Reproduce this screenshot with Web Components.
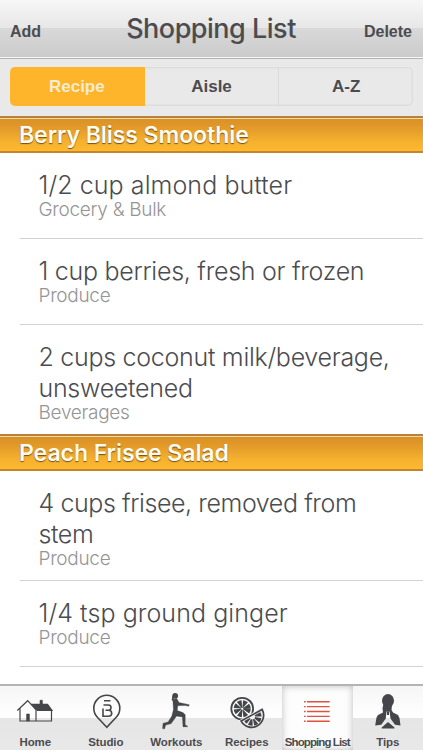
<!DOCTYPE html>
<html lang="en">
<head>
<meta charset="utf-8">
<title>Shopping List</title>
<style>
  html, body {
    margin: 0;
    height: 100%;
    overflow: hidden;
    background: #fff;
    color: #4b4c50;
    font-family: Inter, "Liberation Sans", sans-serif;
  }
</style>
</head>
<body>
<shopping-app></shopping-app>

<script>
class NavBar extends HTMLElement {
  constructor() {
    super();
    this.attachShadow({ mode: 'open' }).innerHTML = /*html*/`
<style>
  :host {
    display: flex;
    box-sizing: border-box;
    height: 59px;
    padding: 0 11px 0 10px;
    border-bottom: 1px solid #b3b3b3;
    box-shadow: inset 0 -1px #f8f8f8;
    background: linear-gradient(#f7f7f7 0, #e7e7e7 28px, #d9d9d9 28px, #cbcbcb 57px);
    white-space: nowrap;
  }
  .action {
    flex: 1 1 0;
    font: bold 16px/63px "Liberation Sans", sans-serif;
  }
  .right {
    text-align: right;
  }
  h1 {
    margin: 0;
    font: 500 27px/57px Inter, sans-serif;
    letter-spacing: -0.5px;
  }
</style>
<span class="action"><slot name="left"></slot></span>
<h1><slot></slot></h1>
<span class="action right"><slot name="right"></slot></span>
`;
  }
}
customElements.define('nav-bar', NavBar);

class SegmentedControl extends HTMLElement {
  constructor() {
    super();
    const root = this.attachShadow({ mode: 'open' });
    const labels = this.getAttribute('labels').split(',');
    root.innerHTML = /*html*/`
<style>
  :host {
    display: block;
    box-sizing: border-box;
    height: 57px;
    padding: 8px 10px 10px;
    background: #e9e9e9;
  }
  div {
    display: flex;
    height: 39px;
    border-radius: 5px;
    box-shadow: inset 0 0 0 1.5px #dedede;
    overflow: hidden;
  }
  button {
    flex: 1;
    padding: 0;
    border: 0;
    border-right: 1px solid #dbdbdb;
    background: none;
    color: inherit;
    font: bold 17px/37px "Liberation Sans", sans-serif;
  }
  button:last-child {
    border-right: 0;
  }
  button.on {
    border-color: #ffb52b;
    background: #ffb52b;
    color: #f5ead2;
  }
</style>
<div>${labels.map((label, i) => `<button class="${i ? '' : 'on'}">${label}</button>`).join('')}</div>
`;
    const buttons = root.querySelectorAll('button');
    buttons.forEach(button => button.addEventListener('click', () => {
      buttons.forEach(b => b.classList.toggle('on', b === button));
    }));
  }
}
customElements.define('segmented-control', SegmentedControl);

class RecipeSection extends HTMLElement {
  constructor() {
    super();
    this.attachShadow({ mode: 'open' }).innerHTML = /*html*/`
<style>
  :host {
    display: block;
  }
  h2 {
    box-sizing: border-box;
    height: 37px;
    margin: 0;
    padding-left: 19px;
    border-top: 2px solid #b8813c;
    border-bottom: 2px solid #c78430;
    background: linear-gradient(#f6d9a0 0, #f6d9a0 1px, #da9127 1px, #e39a29 10px, #f5b02e 23px, #fdb92f 100%);
    color: #fffbef;
    font: 600 23px/34px Inter, sans-serif;
    letter-spacing: -0.05px;
    text-shadow: 0 1px 1px #72501a;
  }
</style>
<h2>${this.getAttribute('name')}</h2>
<slot></slot>
`;
  }
}
customElements.define('recipe-section', RecipeSection);

class ShoppingItem extends HTMLElement {
  constructor() {
    super();
    this.attachShadow({ mode: 'open' }).innerHTML = /*html*/`
<style>
  :host {
    display: block;
    box-sizing: border-box;
    min-height: 86px;
    margin-left: 20px;
    padding: 17px 20px 12px 18.5px;
    border-bottom: 1px solid #d2d2d2;
  }
  /* the next section's header closes the list */
  :host([last]) {
    border-bottom: 0;
  }
  p {
    margin: 0;
    font-size: 25px;
    font-weight: 300;
    line-height: 31px;
    letter-spacing: var(--tracking, -0.28px);
  }
  small {
    display: block;
    color: #959595;
    font-size: 19px;
    font-weight: 300;
    line-height: 18px;
    letter-spacing: -0.3px;
  }
</style>
<p><slot></slot></p>
<small>${this.getAttribute('aisle')}</small>
`;
  }
}
customElements.define('shopping-item', ShoppingItem);

class TabItem extends HTMLElement {
  constructor() {
    super();
    this.attachShadow({ mode: 'open' }).innerHTML = /*html*/`
<style>
  :host {
    display: flex;
    flex-direction: column;
    align-items: center;
    flex: 1 1 0;
    min-width: 0;
    height: 64px;
  }
  :host([selected]) {
    background: #fdfdfd;
    box-shadow: inset 0 0 7px #bbb;
  }
  span {
    font: bold 11.5px/14px "Liberation Sans", sans-serif;
    letter-spacing: -0.1px;
    white-space: nowrap;
  }
  :host([selected]) span {
    letter-spacing: -0.9px;
  }
  ::slotted(svg) {
    display: block;
    width: 40px;
    height: 40px;
    margin: 5px 0 4px;
  }
</style>
<slot></slot>
<span>${this.getAttribute('label')}</span>
`;
  }
}
customElements.define('tab-item', TabItem);

class ShoppingApp extends HTMLElement {
  constructor() {
    super();
    this.attachShadow({ mode: 'open' }).innerHTML = /*html*/`
<style>
  :host {
    display: flex;
    flex-direction: column;
    width: 423px;
    height: 750px;
  }
  main {
    flex: 1;
    min-height: 0;
    overflow: hidden;
  }
  .loose {
    --tracking: 0.08px;
  }
  .tight {
    --tracking: -0.42px;
  }
  nav {
    display: flex;
    height: 64px;
    border-top: 2px solid #b4b4b4;
    background: linear-gradient(#f6f6f6 0, #fff 32px, #e6e6e6 32px, #e8e8e8 100%);
  }
</style>
<nav-bar>
  <span slot="left">Add</span>
  Shopping List
  <span slot="right">Delete</span>
</nav-bar>
<segmented-control labels="Recipe,Aisle,A-Z"></segmented-control>
<main>
  <recipe-section name="Berry Bliss Smoothie">
    <shopping-item class="loose" aisle="Grocery &amp; Bulk">1/2 cup almond butter</shopping-item>
    <shopping-item aisle="Produce">1 cup berries, fresh or frozen</shopping-item>
    <shopping-item last aisle="Beverages">2 cups coconut milk/beverage, unsweetened</shopping-item>
  </recipe-section>
  <recipe-section name="Peach Frisee Salad">
    <shopping-item class="tight" aisle="Produce">4 cups frisee, removed from stem</shopping-item>
    <shopping-item class="loose" aisle="Produce">1/4 tsp ground ginger</shopping-item>
  </recipe-section>
</main>
<nav>
  <tab-item label="Home">
    <svg viewBox="0 0 40 40" fill="none" stroke="#45464a" stroke-width="1.2">
      <path d="M2.300 19.500 12.700 9.700 21.500 19.300M5 17.500V30H36.500V19M21 19V30"/>
      <path d="M17 13.300H32.500L37 19.300H22.500Z" fill="#45464a"/>
      <path d="M25 9.300H27.400V13H25ZM11.600 23H14.400V30H11.600Z" fill="#45464a" stroke-width=".6"/>
    </svg>
  </tab-item>
  <tab-item label="Studio">
    <svg viewBox="0 0 40 40" fill="none" stroke="#45464a" stroke-width="1.600">
      <path d="M20.800 36.300 11.600 26.500A13 13 0 1 1 30 26.500Z"/>
      <path d="M18 9.700H24.500M17.500 14H22.500Q25 14 25 16.600T22.500 19.300H19.500M22.500 19.300Q25.700 19.300 25.700 22.300T22.500 25.300H17V17.500"/>
    </svg>
  </tab-item>
  <tab-item label="Workouts">
    <svg viewBox="0 0 40 40" fill="#45464a">
      <circle cx="19.200" cy="4.800" r="2.900"/>
      <path d="M16.500 4.500 18 7 17 10 15.700 9Z"/>
      <path d="M16.800 8.500 20.800 7.500 23 11.500 29 12.700 33.300 13.700 32.800 15.200 29 14.600 21.800 14.700 21.300 19.500 27 21.600 29.300 23.800 29.200 33.500 32 35.700 27 35.900 26.300 26 20.500 25.300 15 32.800 9.800 34 8.500 38 6.500 37.500 7 32.300 12 31 15.800 25 17.400 18.500Z" stroke="#45464a" stroke-width=".3" stroke-linejoin="round"/>
    </svg>
  </tab-item>
  <tab-item label="Recipes">
    <svg viewBox="0 0 40 40" fill="none" stroke="#45464a">
      <circle cx="15.200" cy="17.700" r="10.900" stroke-width="1.800"/>
      <circle cx="15.200" cy="17.700" r="4.800" stroke-width="7.500" stroke-dasharray="2.850 .92"/>
      <g transform="translate(24.600 24.300) rotate(-29)">
        <path d="M-14 -1.600H14A14 14 0 0 1 -14 -1.600Z" fill="#f3f3f3" stroke="none"/>
        <path d="M-12 0H12A12 12 0 0 1 -12 0Z" stroke-width="1.700"/>
        <path d="M6 1.500A5.700 5.700 0 0 1 -6 1.500" stroke-width="6.500" stroke-dasharray="3 1"/>
      </g>
    </svg>
  </tab-item>
  <tab-item label="Shopping List" selected>
    <svg viewBox="0 0 40 40" stroke="#dd5340" stroke-width="1.400">
      <path d="M7 10.700H8.700M10 10.700H32.700M7 15.600H8.700M10 15.600H32.700M7 20.500H8.700M10 20.500H32.700M7 25.400H8.700M10 25.400H32.700M7 30.300H8.700M10 30.300H32.700"/>
    </svg>
  </tab-item>
  <tab-item label="Tips">
    <svg viewBox="0 0 40 40" fill="#45464a">
      <ellipse cx="20" cy="9.700" rx="6" ry="6.700"/>
      <path d="M15.500 13 24 14 23.500 19 25 21.500 30 24 31.500 27 32.500 34.500 27 33.700 22.500 27.500 21.500 20.500H18.500L17.800 27.500 13.300 33.700 7.200 34.500 8.500 26.500 10 24 15 21.500 14.500 17Z"/>
      <path d="M19 20.500 20 19.500 21 20.500V24H19Z"/>
      <path d="M20 31 26.500 36.500V37.500H13.700V36.500Z"/>
    </svg>
  </tab-item>
</nav>
`;
  }
}
customElements.define('shopping-app', ShoppingApp);
</script>
</body>
</html>
